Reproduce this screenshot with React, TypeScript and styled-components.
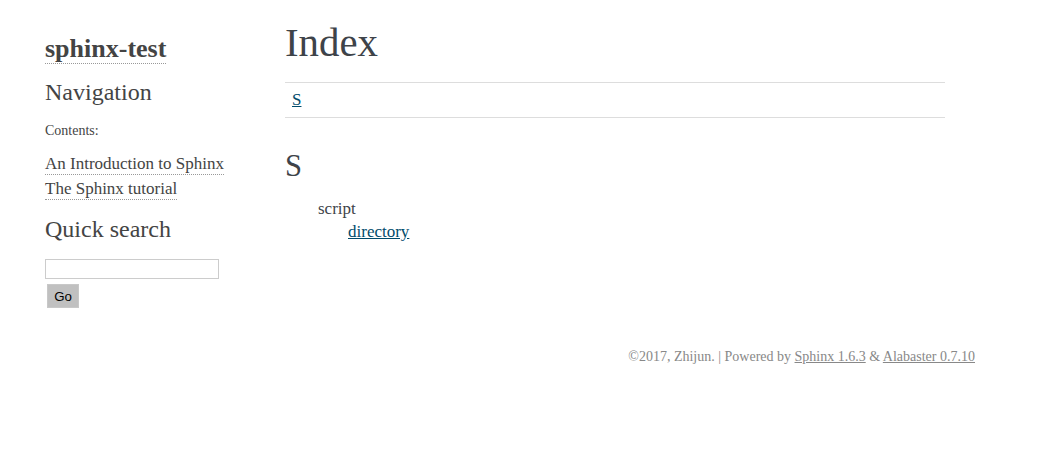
import React from "react";
import styled, { createGlobalStyle } from "styled-components";

const Global = createGlobalStyle`
  html, body { margin: 0; padding: 0; background: #fff; }
  body {
    font-family: "Liberation Serif", "Times New Roman", serif;
    color: #3e4349;
    font-size: 17px;
  }
`;

const Page = styled.div`
  width: 940px;
  margin-left: 35px;
  padding-top: 19px;
`;

const Document = styled.div`
  display: flex;
  align-items: flex-start;
`;

const Sidebar = styled.aside`
  width: 220px;
  flex: none;
  box-sizing: border-box;
  padding: 14px 10px 0 10px;
  font-size: 14px;
  line-height: 1.5;
  color: #444;
`;

const Logo = styled.h1`
  margin: 0;
  font-size: 26px;
  line-height: 32px;
  font-weight: bold;
  a {
    color: #444;
    text-decoration: none;
    padding-bottom: 0;
    border-bottom: 1px dotted #999;
  }
`;

const SideHeading = styled.h3<{ $top: number }>`
  margin: ${(p) => p.$top}px 0 0 0;
  font-size: 24px;
  line-height: 30px;
  font-weight: normal;
  color: #444;
`;

const Caption = styled.p`
  margin: 13px 0 0 0;
  font-size: 14px;
  line-height: 21px;
  color: #444;
`;

const TocList = styled.ul`
  list-style: none;
  margin: 10px 0 0 0;
  padding: 0;
`;

const TocItem = styled.li`
  font-size: 17px;
  line-height: 25px;
  a {
    color: #444;
    text-decoration: none;
    padding-bottom: 1px;
    border-bottom: 1px dotted #999;
  }
`;

const SearchForm = styled.form`
  margin: 15px 0 0 0;
  display: flex;
  flex-direction: column;
  align-items: flex-start;
`;

const SearchInput = styled.input`
  box-sizing: border-box;
  width: 174px;
  height: 20px;
  margin: 0;
  padding: 1px 2px;
  border: 1px solid #ccc;
  font-size: 13px;
`;

const GoButton = styled.button`
  box-sizing: border-box;
  margin: 5px 0 0 2px;
  width: 32px;
  height: 24px;
  padding: 0;
  background: #c0c0c0;
  border: 1px solid #c8c8c8;
  font-family: "Liberation Sans", Arial, sans-serif;
  font-size: 13.3px;
  color: #000;
`;

const Main = styled.main`
  width: 660px;
  padding: 0 30px;
`;

const Title = styled.h1`
  margin: 2px 0 0 0;
  font-size: 40.8px;
  line-height: 44px;
  font-weight: normal;
  color: #3e4349;
`;

const JumpBox = styled.div`
  margin-top: 17px;
  border-top: 1px solid #ddd;
  border-bottom: 1px solid #ddd;
  padding: 7px 7px;
  line-height: 20px;
  a {
    color: #004b6b;
    text-decoration: underline;
  }
`;

const LetterHeading = styled.h2`
  margin: 30px 0 0 0;
  font-size: 30.6px;
  line-height: 36px;
  font-weight: normal;
  color: #3e4349;
`;

const IndexTable = styled.div`
  margin-top: 14px;
  padding-left: 33px;
  line-height: 21px;
`;

const Entry = styled.div``;

const SubEntry = styled.div`
  padding-left: 30px;
  margin-top: 2px;
  a {
    color: #004b6b;
    text-decoration: underline;
  }
`;

const Footer = styled.footer`
  margin-top: 39px;
  text-align: right;
  font-size: 14px;
  line-height: 20px;
  color: #888;
  a {
    color: #888;
    text-decoration: underline;
  }
`;

export default function App() {
  return (
    <>
      <Global />
      <Page>
        <Document>
          <Sidebar>
            <Logo>
              <a href="#">sphinx-test</a>
            </Logo>
            <SideHeading $top={12}>Navigation</SideHeading>
            <Caption>Contents:</Caption>
            <TocList>
              <TocItem>
                <a href="#">An Introduction to Sphinx</a>
              </TocItem>
              <TocItem>
                <a href="#">The Sphinx tutorial</a>
              </TocItem>
            </TocList>
            <SideHeading $top={13}>Quick search</SideHeading>
            <SearchForm onSubmit={(e) => e.preventDefault()}>
              <SearchInput type="text" />
              <GoButton type="submit">Go</GoButton>
            </SearchForm>
          </Sidebar>
          <Main>
            <Title>Index</Title>
            <JumpBox>
              <a href="#S">S</a>
            </JumpBox>
            <LetterHeading>S</LetterHeading>
            <IndexTable>
              <Entry>script</Entry>
              <SubEntry>
                <a href="#">directory</a>
              </SubEntry>
            </IndexTable>
          </Main>
        </Document>
        <Footer>
          ©2017, Zhijun. | Powered by <a href="#">Sphinx 1.6.3</a> &amp;{" "}
          <a href="#">Alabaster 0.7.10</a>
        </Footer>
      </Page>
    </>
  );
}
